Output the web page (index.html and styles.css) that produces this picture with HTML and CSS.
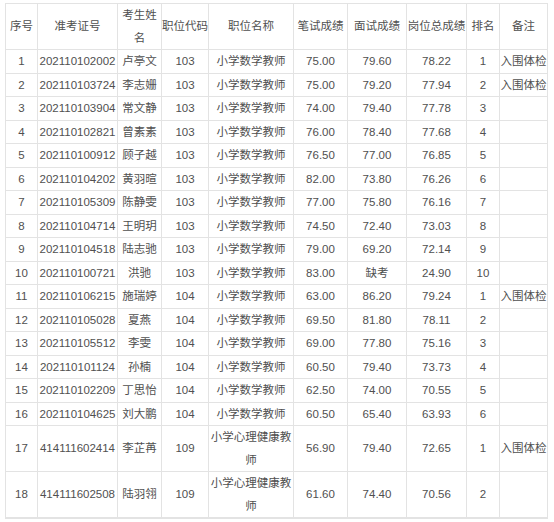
FILE: index.html
```
<!DOCTYPE html>
<html lang="zh-CN">
<head>
<meta charset="utf-8">
<title>成绩表</title>
<link rel="stylesheet" href="styles.css">
</head>
<body>
<table class="score-table">
<colgroup>
<col class="c-no"><col class="c-id"><col class="c-name"><col class="c-code"><col class="c-post"><col class="c-written"><col class="c-interview"><col class="c-total"><col class="c-rank"><col class="c-note">
</colgroup>
<thead>
<tr><th>序号</th><th>准考证号</th><th>考生姓名</th><th>职位代码</th><th>职位名称</th><th>笔试成绩</th><th>面试成绩</th><th>岗位总成绩</th><th>排名</th><th>备注</th></tr>
</thead>
<tbody>
<tr><td>1</td><td>202110102002</td><td>卢亭文</td><td>103</td><td>小学数学教师</td><td>75.00</td><td>79.60</td><td>78.22</td><td>1</td><td>入围体检</td></tr>
<tr><td>2</td><td>202110103724</td><td>李志姗</td><td>103</td><td>小学数学教师</td><td>75.00</td><td>79.20</td><td>77.94</td><td>2</td><td>入围体检</td></tr>
<tr><td>3</td><td>202110103904</td><td>常文静</td><td>103</td><td>小学数学教师</td><td>74.00</td><td>79.40</td><td>77.78</td><td>3</td><td></td></tr>
<tr><td>4</td><td>202110102821</td><td>曾素素</td><td>103</td><td>小学数学教师</td><td>76.00</td><td>78.40</td><td>77.68</td><td>4</td><td></td></tr>
<tr><td>5</td><td>202110100912</td><td>顾子越</td><td>103</td><td>小学数学教师</td><td>76.50</td><td>77.00</td><td>76.85</td><td>5</td><td></td></tr>
<tr><td>6</td><td>202110104202</td><td>黄羽暄</td><td>103</td><td>小学数学教师</td><td>82.00</td><td>73.80</td><td>76.26</td><td>6</td><td></td></tr>
<tr><td>7</td><td>202110105309</td><td>陈静雯</td><td>103</td><td>小学数学教师</td><td>77.00</td><td>75.80</td><td>76.16</td><td>7</td><td></td></tr>
<tr><td>8</td><td>202110104714</td><td>王明玥</td><td>103</td><td>小学数学教师</td><td>74.50</td><td>72.40</td><td>73.03</td><td>8</td><td></td></tr>
<tr><td>9</td><td>202110104518</td><td>陆志驰</td><td>103</td><td>小学数学教师</td><td>79.00</td><td>69.20</td><td>72.14</td><td>9</td><td></td></tr>
<tr><td>10</td><td>202110100721</td><td>洪驰</td><td>103</td><td>小学数学教师</td><td>83.00</td><td>缺考</td><td>24.90</td><td>10</td><td></td></tr>
<tr><td>11</td><td>202110106215</td><td>施瑞婷</td><td>104</td><td>小学数学教师</td><td>63.00</td><td>86.20</td><td>79.24</td><td>1</td><td>入围体检</td></tr>
<tr><td>12</td><td>202110105028</td><td>夏燕</td><td>104</td><td>小学数学教师</td><td>69.50</td><td>81.80</td><td>78.11</td><td>2</td><td></td></tr>
<tr><td>13</td><td>202110105512</td><td>李雯</td><td>104</td><td>小学数学教师</td><td>69.00</td><td>77.80</td><td>75.16</td><td>3</td><td></td></tr>
<tr><td>14</td><td>202110101124</td><td>孙楠</td><td>104</td><td>小学数学教师</td><td>60.50</td><td>79.40</td><td>73.73</td><td>4</td><td></td></tr>
<tr><td>15</td><td>202110102209</td><td>丁思怡</td><td>104</td><td>小学数学教师</td><td>62.50</td><td>74.00</td><td>70.55</td><td>5</td><td></td></tr>
<tr><td>16</td><td>202110104625</td><td>刘大鹏</td><td>104</td><td>小学数学教师</td><td>60.50</td><td>65.40</td><td>63.93</td><td>6</td><td></td></tr>
<tr><td>17</td><td>414111602414</td><td>李芷苒</td><td>109</td><td>小学心理健康教师</td><td>56.90</td><td>79.40</td><td>72.65</td><td>1</td><td>入围体检</td></tr>
<tr><td>18</td><td>414111602508</td><td>陆羽翎</td><td>109</td><td>小学心理健康教师</td><td>61.60</td><td>74.40</td><td>70.56</td><td>2</td><td></td></tr>
<tr><td></td><td></td><td></td><td></td><td></td><td></td><td></td><td></td><td></td><td></td></tr>
</tbody>
</table>
</body>
</html>
```
FILE: styles.css
```
html, body {
  margin: 0;
  padding: 0;
  background: #fff;
}
body {
  padding: 3px 0 0 5px;
  font-family: "Liberation Sans", "Noto Sans CJK SC", sans-serif;
  font-size: 11.5px;
  color: #505050;
}
.score-table {
  border-collapse: collapse;
  table-layout: fixed;
  width: 542px;
}
.score-table th,
.score-table td {
  border: 1px solid #e3e3e3;
  padding: 0;
  line-height: 22.5px;
  text-align: center;
  vertical-align: middle;
  font-weight: normal;
  word-break: break-all;
}
.c-no { width: 32px; }
.c-id { width: 80px; }
.c-name { width: 44px; }
.c-code { width: 47px; }
.c-post { width: 85px; }
.c-written { width: 54px; }
.c-interview { width: 59px; }
.c-total { width: 60px; }
.c-rank { width: 33px; }
.c-note { width: 48px; }
```
